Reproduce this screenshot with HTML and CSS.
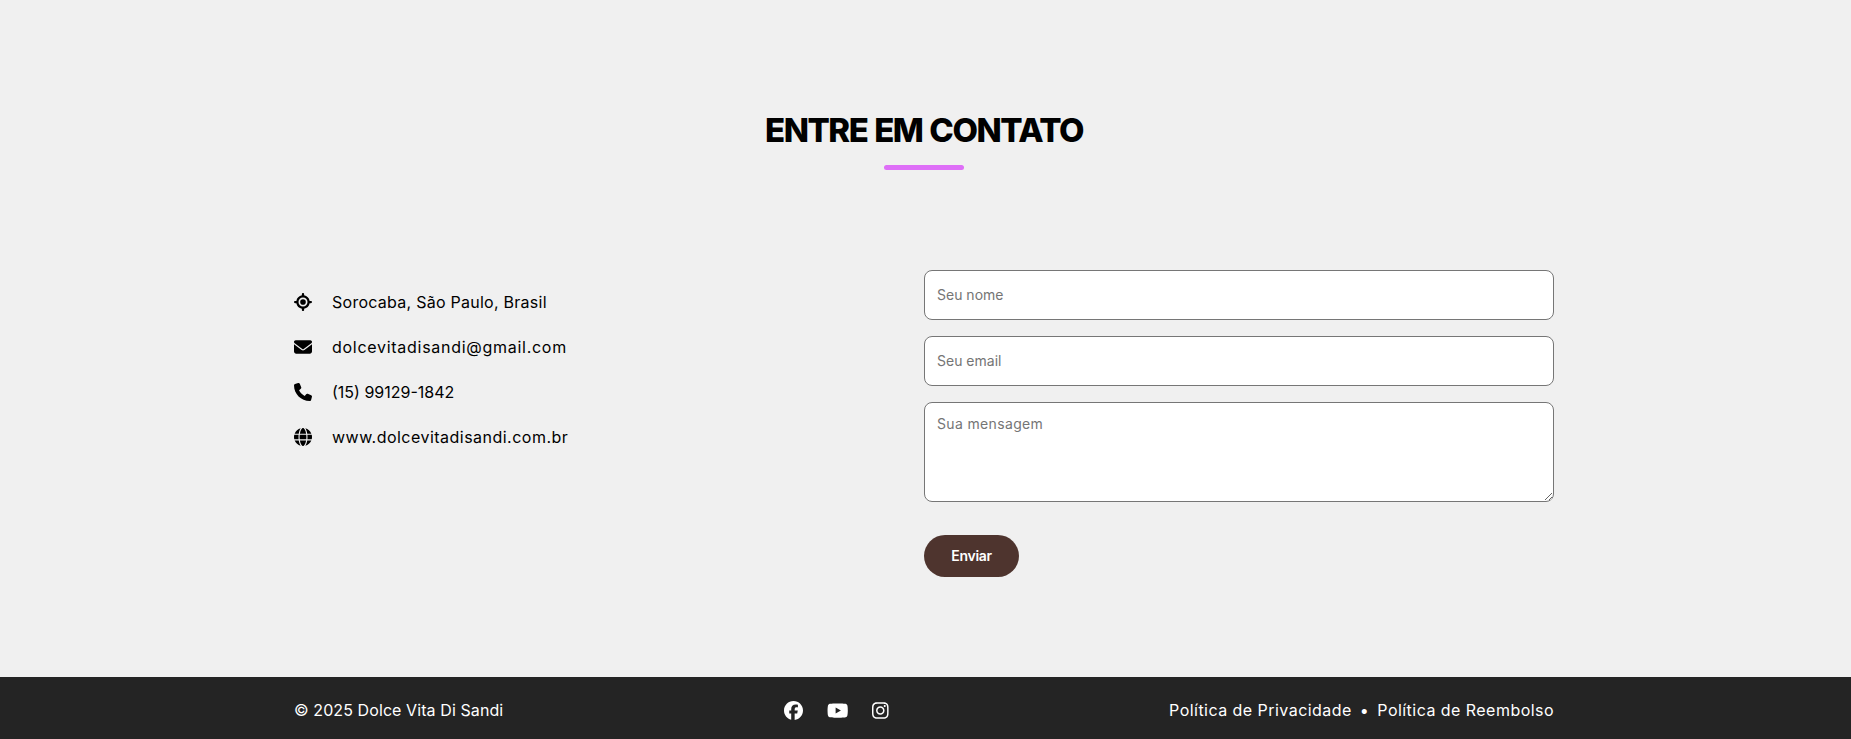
FILE: index.html
```html
<!DOCTYPE html>
<html lang="pt-BR">
  <head>
    <meta charset="utf-8" />
    <title>Dolce Vita Di Sandi</title>
    <link rel="stylesheet" href="styles.css">
  </head>
  <body>
    <section class="contact">
      <div class="title-wrap">
        <h2 class="section-title">ENTRE EM CONTATO</h2>
        <div class="title-bar"></div>
      </div>
      <div class="contact-grid">
        <ul class="info-list">
          <li class="info-item">
            <svg class="info-icon" viewBox="0 0 512 512"><path d="M256 0c17.7 0 32 14.3 32 32V66.7C368.4 80.1 431.9 143.6 445.3 224H480c17.7 0 32 14.3 32 32s-14.3 32-32 32H445.3C431.9 368.4 368.4 431.9 288 445.3V480c0 17.7-14.3 32-32 32s-32-14.3-32-32V445.3C143.6 431.9 80.1 368.4 66.7 288H32c-17.7 0-32-14.3-32-32s14.3-32 32-32H66.7C80.1 143.6 143.6 80.1 224 66.7V32c0-17.7 14.3-32 32-32zM128 256a128 128 0 1 0 256 0 128 128 0 1 0 -256 0zm128-80a80 80 0 1 1 0 160 80 80 0 1 1 0-160z"/></svg>
            <span class="info-text track-addr">Sorocaba, São Paulo, Brasil</span>
          </li>
          <li class="info-item">
            <svg class="info-icon" viewBox="0 0 512 512"><path d="M48 64C21.5 64 0 85.5 0 112c0 15.1 7.1 29.3 19.2 38.4L236.8 313.6c11.4 8.5 27 8.5 38.4 0L492.8 150.4c12.1-9.1 19.2-23.3 19.2-38.4c0-26.5-21.5-48-48-48H48zM0 176V384c0 35.3 28.7 64 64 64H448c35.3 0 64-28.7 64-64V176L294.4 339.2c-22.8 17.1-54 17.1-76.8 0L0 176z"/></svg>
            <span class="info-text track-mail">dolcevitadisandi@gmail.com</span>
          </li>
          <li class="info-item">
            <svg class="info-icon" viewBox="0 0 512 512"><path d="M164.9 24.6c-7.7-18.6-28-28.5-47.4-23.2l-88 24C12.1 30.2 0 46 0 64C0 311.4 200.6 512 448 512c18 0 33.8-12.1 38.6-29.5l24-88c5.3-19.4-4.6-39.7-23.2-47.4l-96-40c-16.3-6.8-35.2-2.1-46.3 11.6L304.7 368C234.3 334.7 177.3 277.7 144 207.3L193.3 167c13.7-11.2 18.4-30 11.6-46.3l-40-96z"/></svg>
            <span class="info-text">(15) 99129-1842</span>
          </li>
          <li class="info-item">
            <svg class="info-icon" viewBox="0 0 512 512"><path d="M352 256c0 22.2-1.2 43.6-3.3 64H163.3c-2.2-20.4-3.3-41.8-3.3-64s1.2-43.6 3.3-64H348.7c2.2 20.4 3.3 41.8 3.3 64zm28.8-64H503.9c5.3 20.5 8.1 41.9 8.1 64s-2.8 43.5-8.1 64H380.8c2.1-20.6 3.2-42 3.2-64s-1.1-43.4-3.2-64zm112.6-32H376.7c-10-63.9-29.8-117.4-55.3-151.6c78.3 20.7 142 77.5 171.9 151.6zm-149.1 0H167.7c6.1-36.4 15.5-68.6 27-94.7c10.5-23.6 22.2-40.7 33.5-51.5C239.4 3.2 248.7 0 256 0s16.6 3.2 27.8 13.8c11.3 10.8 23 27.9 33.5 51.5c11.6 26 20.9 58.2 27 94.7zm-209 0H18.6C48.6 85.9 112.2 29.1 190.6 8.4C165.1 42.6 145.3 96.1 135.3 160zM8.1 192H131.2c-2.1 20.6-3.2 42-3.2 64s1.1 43.4 3.2 64H8.1C2.8 299.5 0 278.1 0 256s2.8-43.5 8.1-64zM194.7 446.6c-11.6-26-20.9-58.2-27-94.6H344.3c-6.1 36.4-15.5 68.6-27 94.6c-10.5 23.6-22.2 40.7-33.5 51.5C272.6 508.8 263.3 512 256 512s-16.6-3.2-27.8-13.8c-11.3-10.8-23-27.9-33.5-51.5zM135.3 352c10 63.9 29.8 117.4 55.3 151.6C112.2 482.9 48.6 426.1 18.6 352H135.3zm358.1 0c-30 74.1-93.6 130.9-171.9 151.6c25.5-34.2 45.2-87.7 55.3-151.6H493.4z"/></svg>
            <span class="info-text track-web">www.dolcevitadisandi.com.br</span>
          </li>
        </ul>
        <form class="contact-form">
          <input class="field" type="text" placeholder="Seu nome" />
          <input class="field" type="email" placeholder="Seu email" />
          <textarea class="field field-area" placeholder="Sua mensagem"></textarea>
          <button class="send-btn" type="button">Enviar</button>
        </form>
      </div>
    </section>
    <footer class="site-footer">
      <div class="footer-inner">
        <span class="copyright">© 2025 Dolce Vita Di Sandi</span>
        <div class="social">
          <svg class="social-icon fb" viewBox="0 0 512 512"><path d="M512 256C512 114.6 397.4 0 256 0S0 114.6 0 256C0 376 82.7 476.8 194.2 504.5V334.2H141.4V256h52.8V222.3c0-87.1 39.4-127.5 125-127.5c16.2 0 44.2 3.2 55.7 6.4V172c-6-.6-16.5-1-29.6-1c-42 0-58.2 15.9-58.2 57.2V256h83.6l-14.4 78.2H287V510.1C413.8 494.8 512 386.9 512 256h0z"/></svg>
          <svg class="social-icon yt" viewBox="0 0 576 512"><path d="M549.655 124.083c-6.281-23.65-24.787-42.276-48.284-48.597C458.781 64 288 64 288 64S117.22 64 74.629 75.486c-23.497 6.322-42.003 24.947-48.284 48.597-11.412 42.867-11.412 132.305-11.412 132.305s0 89.438 11.412 132.305c6.281 23.65 24.787 41.5 48.284 47.821C117.22 448 288 448 288 448s170.78 0 213.371-11.486c23.497-6.321 42.003-24.171 48.284-47.821 11.412-42.867 11.412-132.305 11.412-132.305s0-89.438-11.412-132.305zm-317.51 213.508V175.185l142.739 81.205-142.739 81.201z"/></svg>
          <svg class="social-icon ig" viewBox="0 0 448 512"><path d="M224.1 141c-63.6 0-114.9 51.3-114.9 114.9s51.3 114.9 114.9 114.9S339 319.5 339 255.9 287.7 141 224.1 141zm0 189.6c-41.1 0-74.7-33.5-74.7-74.7s33.5-74.7 74.7-74.7 74.7 33.5 74.7 74.7-33.6 74.7-74.7 74.7zm146.4-194.3c0 14.9-12 26.8-26.8 26.8-14.9 0-26.8-12-26.8-26.8s12-26.8 26.8-26.8 26.8 12 26.8 26.8zm76.1 27.2c-1.7-35.9-9.9-67.7-36.2-93.9-26.2-26.2-58-34.4-93.9-36.2-37-2.1-147.9-2.1-184.9 0-35.8 1.7-67.6 9.9-93.9 36.1s-34.4 58-36.2 93.9c-2.1 37-2.1 147.9 0 184.9 1.7 35.9 9.9 67.7 36.2 93.9s58 34.4 93.9 36.2c37 2.1 147.9 2.1 184.9 0 35.9-1.7 67.7-9.9 93.9-36.2 26.2-26.2 34.4-58 36.2-93.9 2.1-37 2.1-147.8 0-184.8zM398.8 388c-7.8 19.6-22.9 34.7-42.6 42.6-29.5 11.7-99.5 9-132.1 9s-102.7 2.6-132.1-9c-19.6-7.8-34.7-22.9-42.6-42.6-11.7-29.5-9-99.5-9-132.1s-2.6-102.7 9-132.1c7.8-19.6 22.9-34.7 42.6-42.6 29.5-11.7 99.5-9 132.1-9s102.7-2.6 132.1 9c19.6 7.8 34.7 22.9 42.6 42.6 11.7 29.5 9 99.5 9 132.1s2.7 102.7-9 132.1z"/></svg>
        </div>
        <div class="footer-links">
          <span>Política de Privacidade</span>
          <span class="dot">•</span>
          <span>Política de Reembolso</span>
        </div>
      </div>
    </footer>
  </body>
</html>
```

FILE: styles.css
```css
* {
  box-sizing: border-box;
}
body {
  margin: 0;
  background: #f0f0f0;
  color: #000;
  font-family: Inter, "Noto Sans", sans-serif;
}

.contact {
  height: 677px;
  padding: 112px 3px 0 0;
}
.title-wrap {
  display: flex;
  flex-direction: column;
  align-items: center;
}
.section-title {
  margin: 0;
  font-size: 33px;
  line-height: 36px;
  font-weight: 800;
  letter-spacing: -1.45px;
  word-spacing: 1px;
}
.title-bar {
  width: 80px;
  height: 5px;
  margin-top: 17px;
  border-radius: 3px;
  background: #de6ff7;
}

.contact-grid {
  display: grid;
  grid-template-columns: 1fr 1fr;
  width: 1260px;
  margin: 100px auto 0;
}

.info-list {
  list-style: none;
  margin: 0;
  padding: 17px 0 0;
  display: flex;
  flex-direction: column;
  gap: 15px;
}
.info-item {
  display: flex;
  align-items: center;
  gap: 20px;
  height: 30px;
  font-size: 16px;
}
.info-icon {
  width: 18px;
  height: 18px;
  flex: none;
  fill: #000;
  margin-bottom: 1px;
}
.track-addr {
  letter-spacing: 0.26px;
}
.track-mail {
  letter-spacing: 0.72px;
}
.track-web {
  letter-spacing: 0.48px;
}

.contact-form {
  display: flex;
  flex-direction: column;
  align-items: flex-start;
  gap: 16px;
}
.field {
  display: block;
  width: 100%;
  height: 50px;
  padding: 10px 12px 12px;
  border: 1px solid #767676;
  border-radius: 8px;
  background: #fff;
  font-family: inherit;
  font-size: 14px;
  color: #000;
}
.field-area {
  height: 100px;
  padding-top: 12px;
  letter-spacing: 0.35px;
}
.send-btn {
  width: 95px;
  height: 42px;
  margin-top: 17px;
  padding: 0 0 2px;
  border: 0;
  border-radius: 21px;
  background: #4e342e;
  color: #fff;
  font-family: inherit;
  font-size: 14px;
  font-weight: 600;
  letter-spacing: -0.3px;
}

.site-footer {
  height: 62px;
  padding: 3px 3px 0 0;
  background: #242424;
  color: #fff;
}
.footer-inner {
  display: flex;
  align-items: center;
  justify-content: space-between;
  width: 1260px;
  height: 100%;
  margin: 0 auto;
  font-size: 16px;
}
.copyright {
  letter-spacing: 0.09px;
}
.social {
  display: flex;
  align-items: center;
  gap: 24px;
  margin-top: 2px;
}
.social-icon {
  height: 19px;
  fill: #fff;
}
.fb {
  width: 19px;
}
.yt {
  width: 21.4px;
}
.ig {
  width: 16.6px;
}
.footer-links {
  display: flex;
  gap: 8px;
  letter-spacing: 0.46px;
}
```
